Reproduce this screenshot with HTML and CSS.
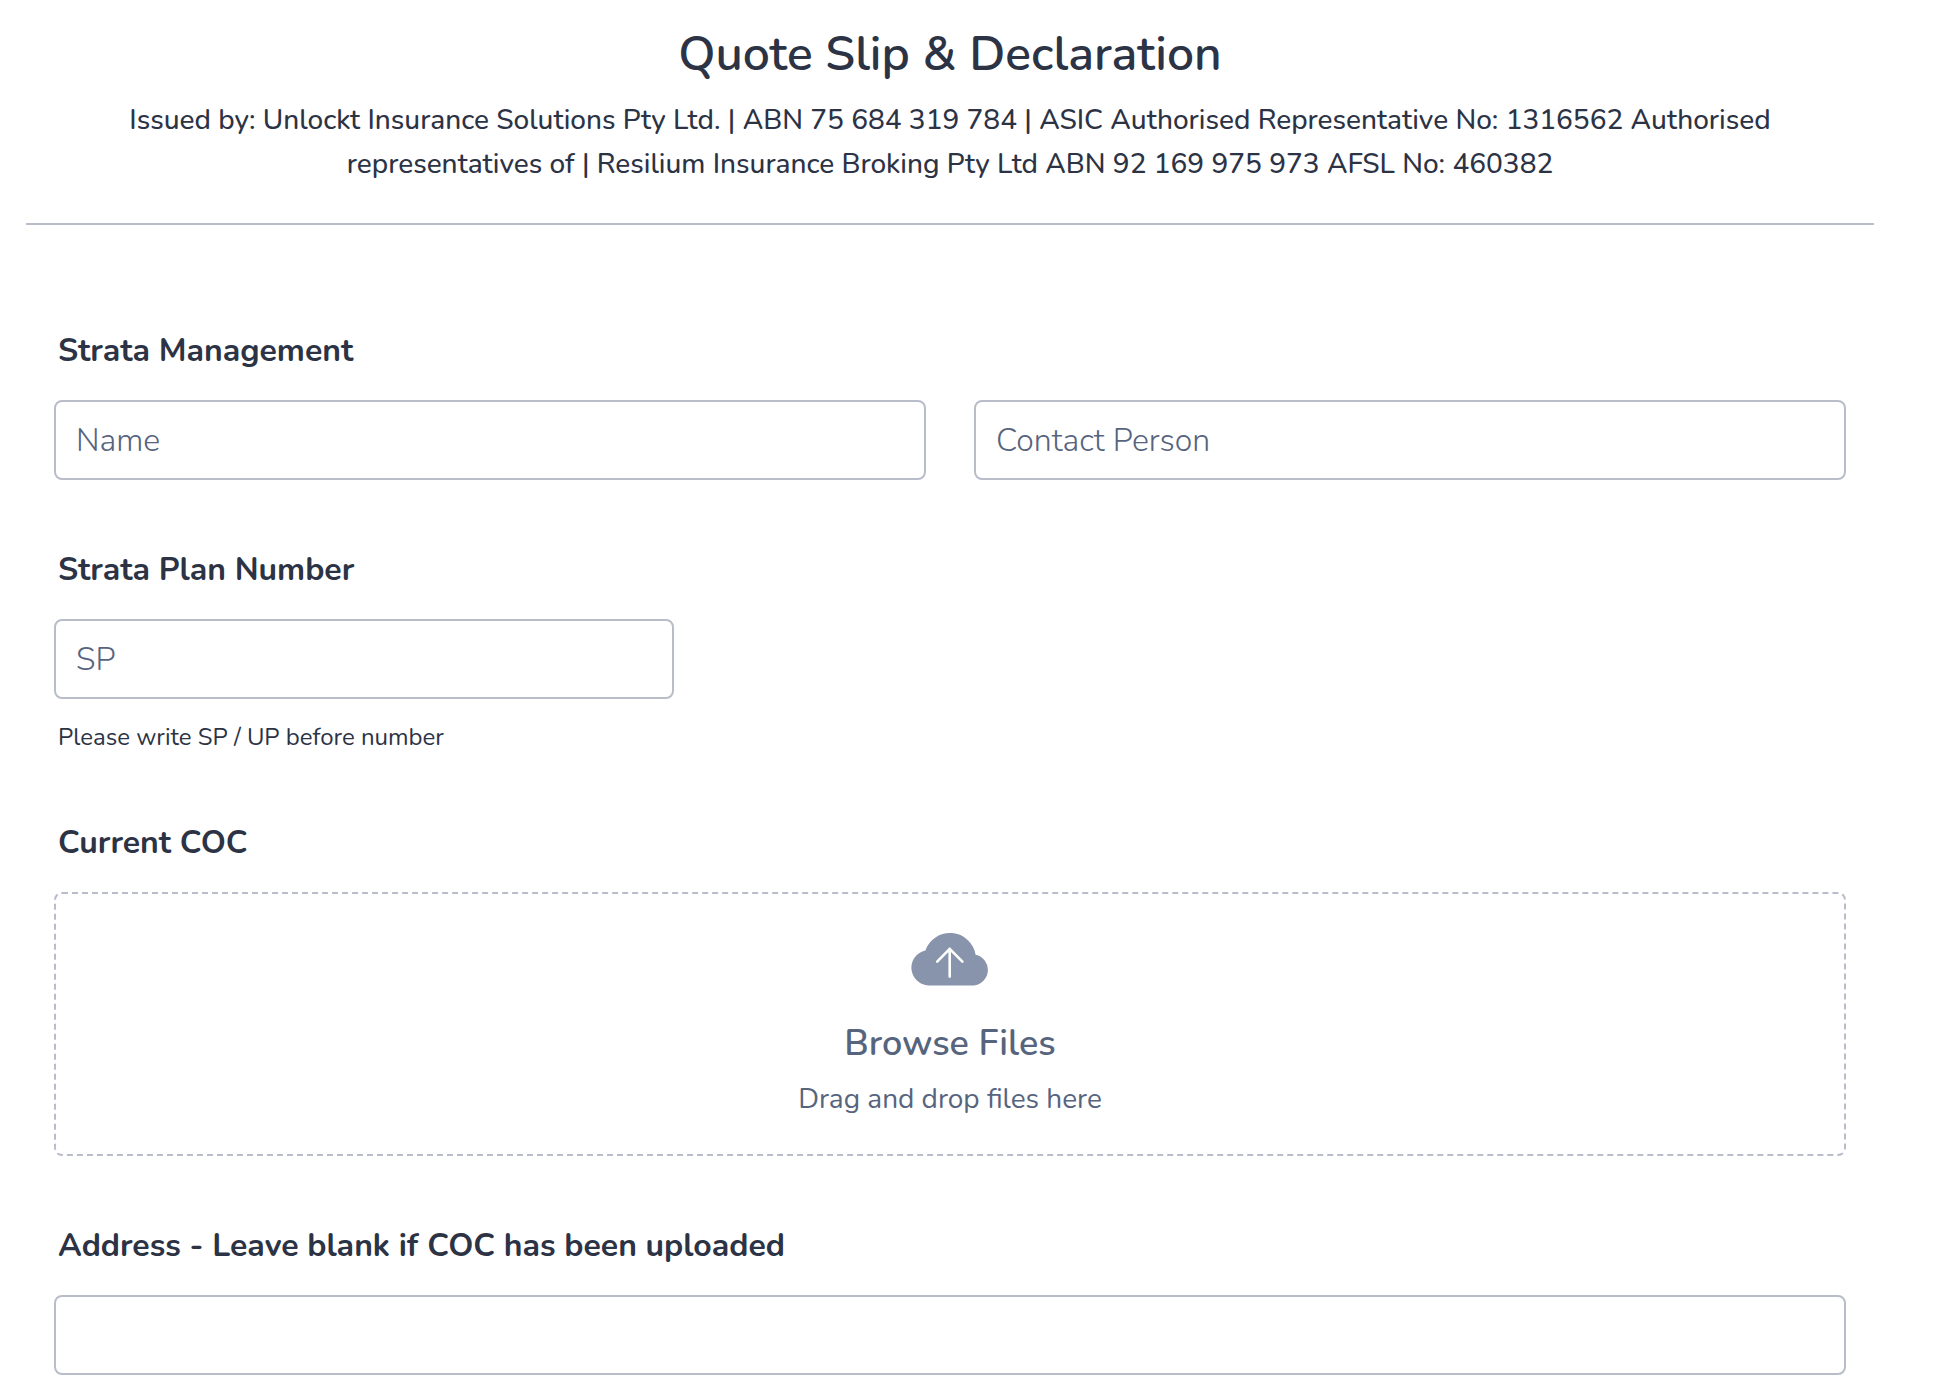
FILE: index.html
```html
<!DOCTYPE html>
<html lang="en">
<head>
  <meta charset="utf-8">
  <meta name="viewport" content="width=device-width, initial-scale=1">
  <title>Quote Slip &amp; Declaration</title>
  <link rel="stylesheet" href="styles.css">
</head>
<body>
  <form class="form">
    <header class="form-header">
      <h1 class="form-title">Quote Slip &amp; Declaration</h1>
      <p class="form-subtitle">Issued by: Unlockt Insurance Solutions Pty Ltd. | ABN 75 684 319 784 | ASIC Authorised Representative No: 1316562 Authorised representatives of | Resilium Insurance Broking Pty Ltd ABN 92 169 975 973 AFSL No: 460382</p>
    </header>

    <div class="questions">
      <div class="question">
        <label class="question-label" for="strata-name">Strata Management</label>
        <div class="field-row">
          <input class="text-input" id="strata-name" type="text" placeholder="Name">
          <input class="text-input" id="strata-contact" type="text" placeholder="Contact Person" aria-label="Contact Person">
        </div>
      </div>

      <div class="question">
        <label class="question-label" for="plan-number">Strata Plan Number</label>
        <input class="text-input text-input-short" id="plan-number" type="text" placeholder="SP" aria-describedby="plan-hint">
        <p class="hint" id="plan-hint">Please write SP / UP before number</p>
      </div>

      <div class="question">
        <label class="question-label" for="coc-file">Current COC</label>
        <label class="dropzone">
          <input class="file-input" id="coc-file" type="file">
          <svg class="dropzone-icon" viewBox="0 0 78 54" aria-hidden="true">
            <path fill="#8894ab" d="M17.5 53.4A17.7 17.7 0 0 1 14.4 18.4A26 26 0 0 1 64.6 22.8A15.5 15.5 0 0 1 62.8 53.4Z"/>
            <path fill="none" stroke="#fff" stroke-width="2.6" stroke-linecap="round" stroke-linejoin="round" d="M38.7 44.6V16.8M26.2 29.6L38.7 16.8L51.4 29.6"/>
          </svg>
          <span class="dropzone-title">Browse Files</span>
          <span class="dropzone-text">Drag and drop files here</span>
        </label>
      </div>

      <div class="question">
        <label class="question-label" for="address">Address - Leave blank if COC has been uploaded</label>
        <input class="text-input" id="address" type="text">
      </div>
    </div>
  </form>
</body>
</html>
```
FILE: styles.css
```css
* {
  box-sizing: border-box;
}

body {
  margin: 0;
  background: #fff;
  color: #2c3345;
  font-family: Nunito, Lato, sans-serif;
}

.form {
  padding: 24px 62px 18px 26px;
}

.form-header {
  padding: 0 60px 37px;
  border-bottom: 2px solid #b8bdc9;
  text-align: center;
}

.form-title {
  margin: 0 0 14px;
  font-size: 48px;
  font-weight: 600;
  line-height: 60px;
}

.form-subtitle {
  margin: 0;
  font-size: 28px;
  font-weight: 500;
  line-height: 44px;
}

.questions {
  display: flex;
  flex-direction: column;
  gap: 70px;
  padding: 106px 28px 0;
}

.question {
  display: flex;
  flex-direction: column;
}

.question-label {
  margin: 0 4px 29px;
  font-size: 32px;
  font-weight: 700;
  line-height: 40px;
}

.field-row {
  display: grid;
  grid-template-columns: 1fr 1fr;
  gap: 48px;
}

.text-input {
  width: 100%;
  height: 80px;
  padding: 0 20px;
  border: 2px solid #b8bdc9;
  border-radius: 8px;
  background: #fff;
  color: #2c3345;
  font: inherit;
  font-size: 32px;
}

.text-input::placeholder {
  color: #57647e;
  font-weight: 300;
  opacity: 1;
}

.text-input-short {
  max-width: 620px;
}

.hint {
  margin: 22px 4px 0;
  font-size: 24px;
  line-height: 32px;
}

.dropzone {
  position: relative;
  display: flex;
  flex-direction: column;
  align-items: center;
  padding: 38px 20px 33px;
  border: 2px dashed #b8bdc9;
  border-radius: 8px;
  color: #57647e;
  cursor: pointer;
}

.file-input {
  position: absolute;
  inset: 0;
  width: 100%;
  height: 100%;
  opacity: 0;
  cursor: pointer;
}

.dropzone-icon {
  width: 78px;
  height: 54px;
  margin-bottom: 36px;
}

.dropzone-title {
  margin-bottom: 11px;
  font-size: 36px;
  font-weight: 600;
  line-height: 44px;
}

.dropzone-text {
  font-size: 28px;
  line-height: 44px;
}
```
